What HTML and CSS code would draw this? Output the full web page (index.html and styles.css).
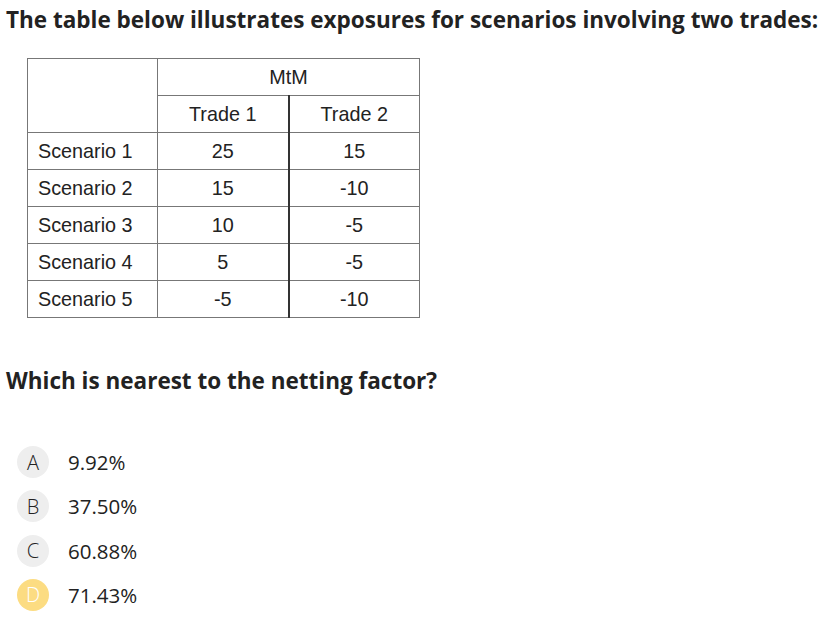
FILE: index.html
```html
<!DOCTYPE html>
<html>
<head>
<meta charset="utf-8">
<link rel="stylesheet" href="styles.css">
</head>
<body>
<div class="page">
  <h1 class="title">The table below illustrates exposures for scenarios involving two trades:</h1>
  <table class="grid">
    <tr class="r-mtm">
      <td class="blank" rowspan="2"></td>
      <td class="c" colspan="2">MtM</td>
    </tr>
    <tr>
      <td class="c mid">Trade 1</td>
      <td class="c">Trade 2</td>
    </tr>
    <tr><td class="lbl">Scenario 1</td><td class="c mid">25</td><td class="c">15</td></tr>
    <tr><td class="lbl">Scenario 2</td><td class="c mid">15</td><td class="c">-10</td></tr>
    <tr><td class="lbl">Scenario 3</td><td class="c mid">10</td><td class="c">-5</td></tr>
    <tr><td class="lbl">Scenario 4</td><td class="c mid">5</td><td class="c">-5</td></tr>
    <tr><td class="lbl">Scenario 5</td><td class="c mid">-5</td><td class="c">-10</td></tr>
  </table>
  <h2 class="question">Which is nearest to the netting factor?</h2>
  <ul class="options">
    <li class="opt"><span class="badge">A</span><span class="val">9.92%</span></li>
    <li class="opt"><span class="badge">B</span><span class="val">37.50%</span></li>
    <li class="opt"><span class="badge">C</span><span class="val">60.88%</span></li>
    <li class="opt"><span class="badge sel">D</span><span class="val">71.43%</span></li>
  </ul>
</div>
</body>
</html>
```
FILE: styles.css
```css
html, body {
  margin: 0;
  padding: 0;
  background: #ffffff;
}
.page {
  font-family: "Open Sans", "Noto Sans", sans-serif;
  color: #222;
  padding: 0 0 0 6px;
}
.title {
  margin: 0;
  padding-top: 5px;
  font-size: 22.5px;
  font-weight: 700;
  line-height: 30px;
  color: #222;
  white-space: nowrap;
}
.grid {
  margin: 23px 0 0 21px;
  border-collapse: collapse;
  font-family: "Liberation Sans", Arial, sans-serif;
  font-size: 19.8px;
  color: #222;
  border: 1px solid #555;
}
.grid td {
  height: 37px;
  padding: 0;
  border: 1px solid #777;
  box-sizing: border-box;
}
.grid td.blank { width: 130px; }
.grid td.c { text-align: center; width: 131px; }
.grid td.mid { border-right: 2px solid #333; }
.grid td.lbl { padding-left: 10px; text-align: left; }
.question {
  margin: 48px 0 0 0;
  font-size: 22.5px;
  font-weight: 700;
  line-height: 30px;
  color: #222;
}
.options {
  list-style: none;
  margin: 50px 0 0 11px;
  padding: 0;
  display: flex;
  flex-direction: column;
  gap: 12.3px;
}
.opt {
  display: flex;
  align-items: center;
  height: 32px;
}
.badge {
  width: 32px;
  height: 32px;
  border-radius: 50%;
  background: #eeeeee;
  display: flex;
  align-items: center;
  justify-content: center;
  font-family: "Open Sans", sans-serif;
  font-weight: 300;
  font-size: 20px;
  color: #222;
}
.badge.sel {
  background: #fcdc82;
  color: #fff;
}
.val {
  margin-left: 19px;
  font-size: 20.5px;
  color: #222;
}
```
